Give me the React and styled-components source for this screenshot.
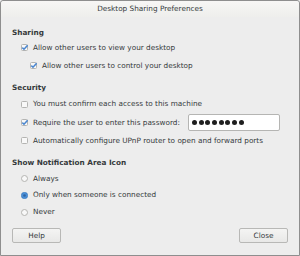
import styled, { createGlobalStyle } from "styled-components";

const GlobalStyle = createGlobalStyle`
  html, body {
    margin: 0;
    padding: 0;
    background: #ededed;
  }
  body {
    font-family: "DejaVu Sans", sans-serif;
    font-size: 7.3px;
    color: #353a3c;
  }
`;

const Window = styled.div`
  box-sizing: border-box;
  width: 300px;
  height: 256px;
  border: 1px solid #8e8e8e;
  border-radius: 3px 3px 0 0;
  background: #ededed;
  display: flex;
  flex-direction: column;
`;

const TitleBar = styled.div`
  height: 16px;
  line-height: 16px;
  text-align: center;
  background: linear-gradient(#f7f6f5, #eeeeec);
  border-radius: 3px 3px 0 0;
`;

const Content = styled.div`
  flex: 1;
  display: flex;
  flex-direction: column;
  padding: 11px 11px 12px 11px;
`;

const Heading = styled.div`
  height: 10px;
  line-height: 10px;
  font-weight: bold;
  margin-top: ${(p) => p.$top || 0}px;
  margin-bottom: ${(p) => p.$gap || 0}px;
`;

const Row = styled.div`
  display: flex;
  align-items: center;
  height: ${(p) => p.$h || 18.3}px;
  padding-left: ${(p) => 9 + (p.$indent || 0)}px;
  gap: 5px;
  white-space: nowrap;
`;

const Label = styled.span`
  line-height: 10px;
`;

const Entry = styled.div`
  box-sizing: border-box;
  margin-left: auto;
  margin-right: 8px;
  width: 92px;
  height: 17px;
  background: #fff;
  border: 1px solid #b5b5b3;
  border-radius: 2px;
  display: flex;
  align-items: center;
  gap: 1.7px;
  padding-left: 3px;
`;

const Dot = styled.span`
  width: 5px;
  height: 5px;
  border-radius: 50%;
  background: #1e1e1e;
`;

const Footer = styled.div`
  margin-top: auto;
  display: flex;
  justify-content: space-between;
`;

const Button = styled.button`
  box-sizing: border-box;
  width: 49px;
  height: 15px;
  padding: 0;
  font-family: inherit;
  font-size: 7.3px;
  color: #353a3c;
  background: linear-gradient(#f4f4f3, #e8e8e7);
  border: 1px solid #b8b8b6;
  border-radius: 2px;
`;

const Check = ({ on }) => (
  <svg width="7" height="7" viewBox="0 0 7 7">
    <rect x="0.5" y="0.5" width="6" height="6" rx="1" fill="#f8f8f8" stroke="#b4b4b2" />
    {on && (
      <path d="M1.3 3.6 L3 5.2 L6.6 1.2" fill="none" stroke="#4a86cf" strokeWidth="1.5" />
    )}
  </svg>
);

const Radio = ({ on }) => (
  <svg width="7" height="7" viewBox="0 0 7 7">
    {on ? (
      <>
        <circle cx="3.5" cy="3.5" r="3.2" fill="#4a90d9" stroke="#3d78b8" strokeWidth="0.6" />
        <circle cx="3.5" cy="3.5" r="1.3" fill="#2f64a3" />
      </>
    ) : (
      <circle cx="3.5" cy="3.5" r="3" fill="#f8f8f8" stroke="#b4b4b2" />
    )}
  </svg>
);

export default function App() {
  return (
    <>
      <GlobalStyle />
      <Window>
        <TitleBar>Desktop Sharing Preferences</TitleBar>
        <Content>
          <Heading $gap={0.5}>Sharing</Heading>
          <Row>
            <Check on />
            <Label>Allow other users to view your desktop</Label>
          </Row>
          <Row $indent={9}>
            <Check on />
            <Label>Allow other users to control your desktop</Label>
          </Row>

          <Heading $top={8} $gap={2}>Security</Heading>
          <Row>
            <Check />
            <Label>You must confirm each access to this machine</Label>
          </Row>
          <Row>
            <Check on />
            <Label>Require the user to enter this password:</Label>
            <Entry>
              {Array.from({ length: 8 }).map((_, i) => (
                <Dot key={i} />
              ))}
            </Entry>
          </Row>
          <Row>
            <Check />
            <Label>Automatically configure UPnP router to open and forward ports</Label>
          </Row>

          <Heading $top={8} $gap={2.3}>Show Notification Area Icon</Heading>
          <Row $h={16.7}>
            <Radio />
            <Label>Always</Label>
          </Row>
          <Row $h={16.7}>
            <Radio on />
            <Label>Only when someone is connected</Label>
          </Row>
          <Row $h={16.7}>
            <Radio />
            <Label>Never</Label>
          </Row>

          <Footer>
            <Button>Help</Button>
            <Button>Close</Button>
          </Footer>
        </Content>
      </Window>
    </>
  );
}
